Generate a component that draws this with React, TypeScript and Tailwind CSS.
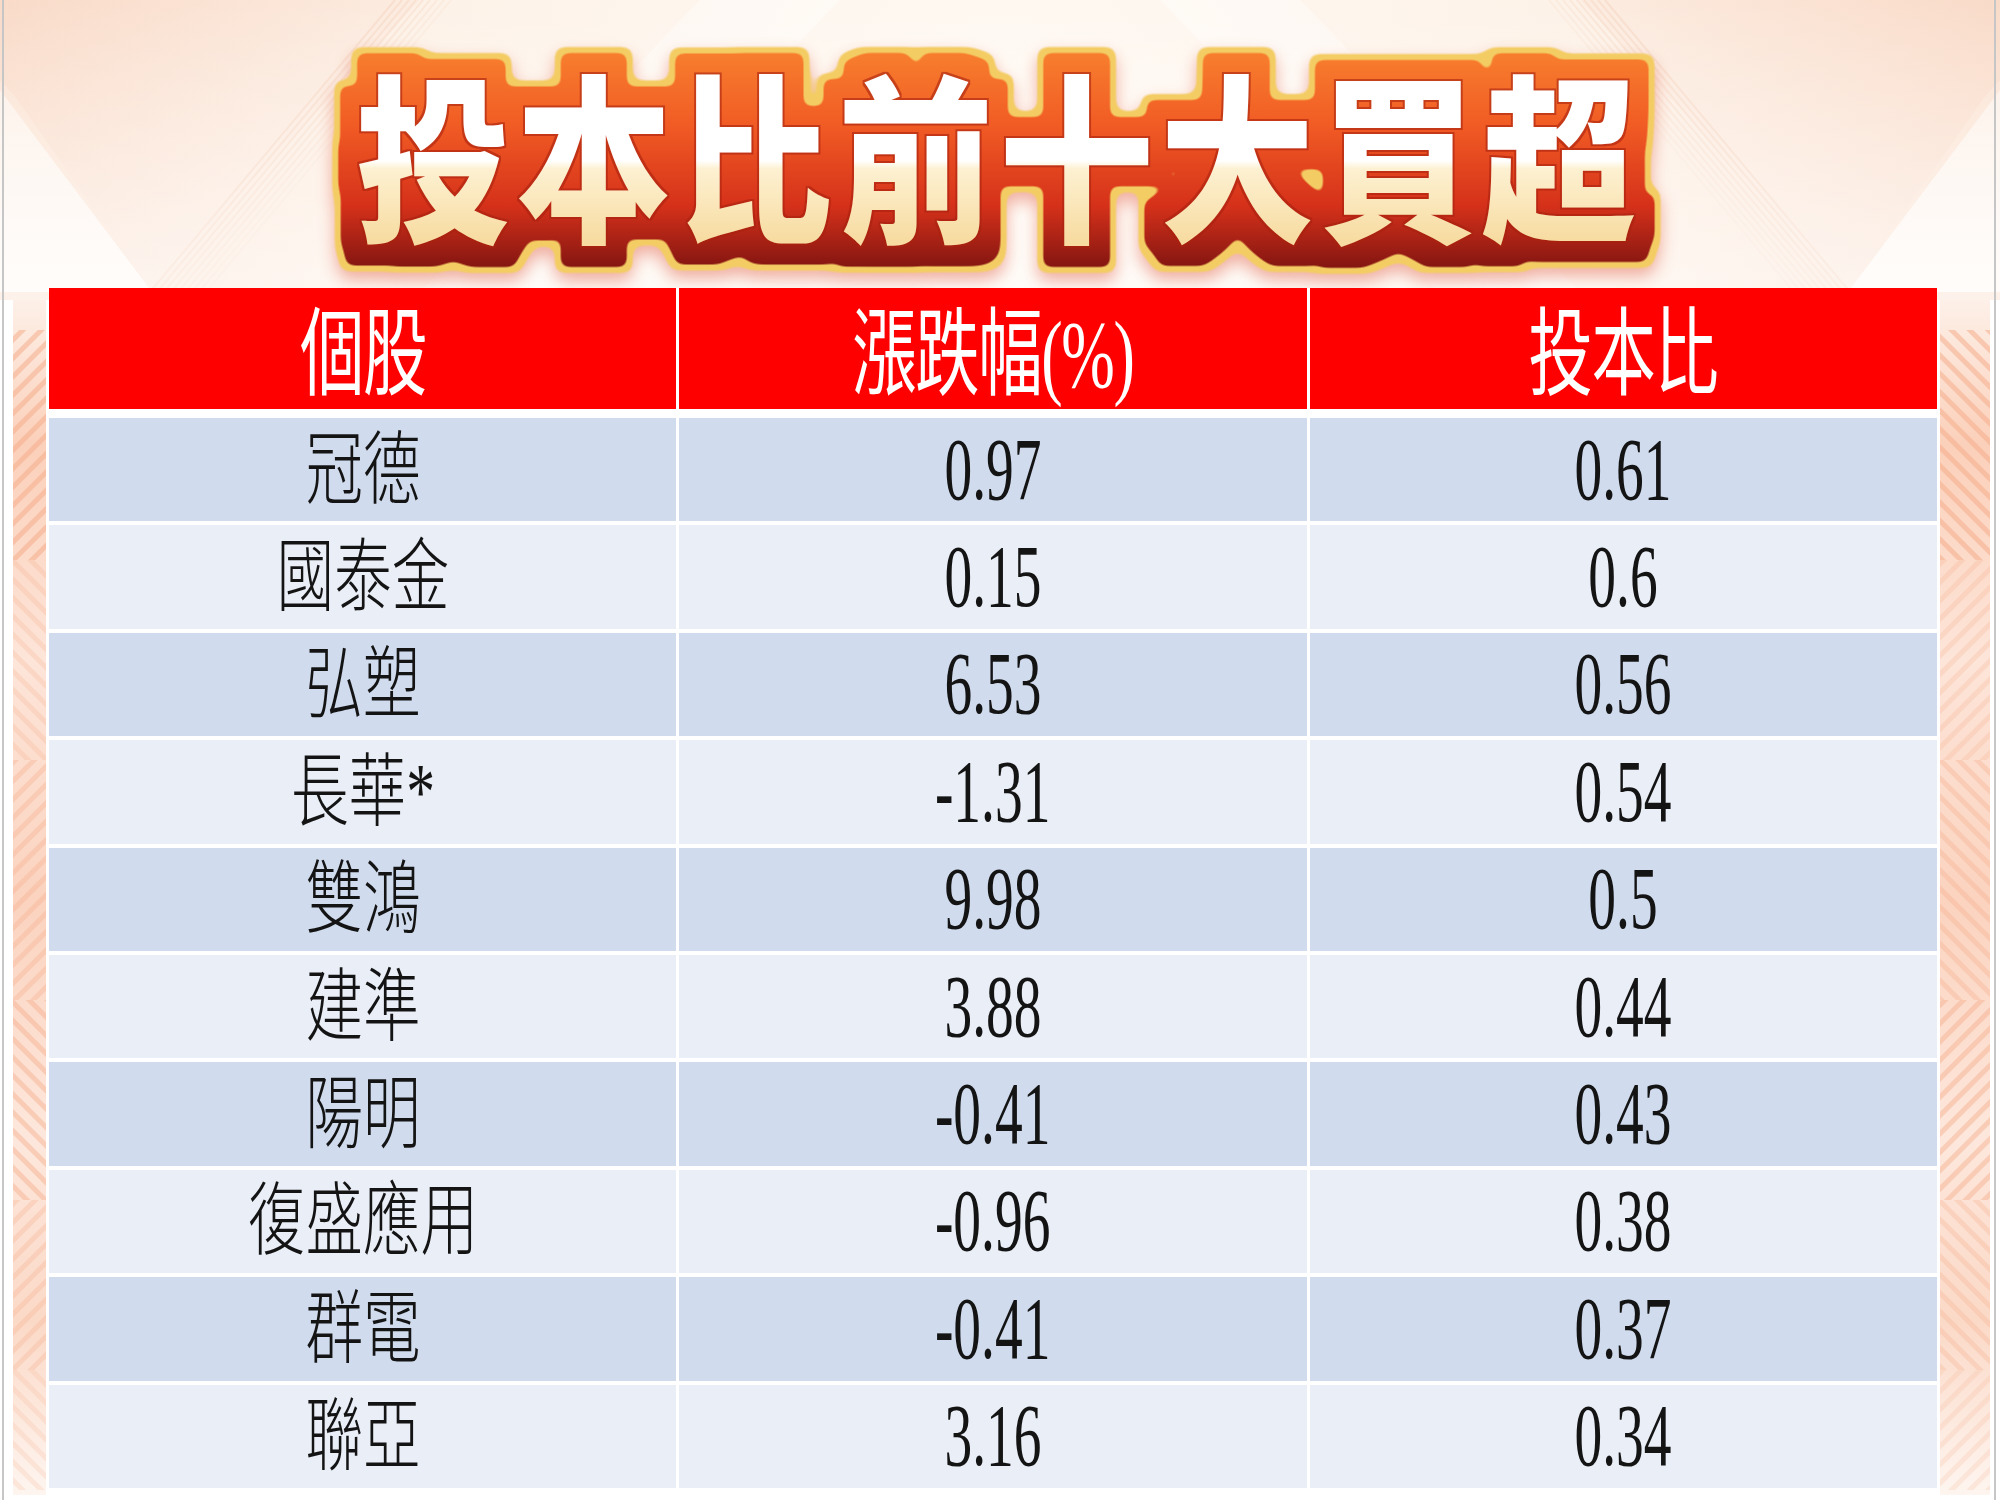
import React from "react";

const TITLE = "投本比前十大買超";

const ROWS: [string, string, string][] = [
  ["冠德", "0.97", "0.61"],
  ["國泰金", "0.15", "0.6"],
  ["弘塑", "6.53", "0.56"],
  ["長華*", "-1.31", "0.54"],
  ["雙鴻", "9.98", "0.5"],
  ["建準", "3.88", "0.44"],
  ["陽明", "-0.41", "0.43"],
  ["復盛應用", "-0.96", "0.38"],
  ["群電", "-0.41", "0.37"],
  ["聯亞", "3.16", "0.34"],
];

const BAND_SEGMENTS = [
  { y: 330, h: 230, a: true, o: 0.55 },
  { y: 560, h: 200, a: false, o: 0.25 },
  { y: 760, h: 240, a: true, o: 0.35 },
  { y: 1000, h: 200, a: false, o: 0.45 },
  { y: 1200, h: 170, a: true, o: 0.3 },
  { y: 1370, h: 120, a: false, o: 0.2 },
];

function Background() {
  const lines = Array.from({ length: 9 }, (_, i) => i);
  return (
    <svg width="2000" height="1500" viewBox="0 0 2000 1500" className="block">
      <defs>
        <radialGradient id="bgTop" cx="1000" cy="140" r="1050" gradientUnits="userSpaceOnUse">
          <stop offset="0" stopColor="#fffaf4" />
          <stop offset="0.55" stopColor="#fdf2e8" />
          <stop offset="1" stopColor="#fbe3d3" />
        </radialGradient>
        <linearGradient id="vLeft" x1="0" y1="0" x2="300" y2="290" gradientUnits="userSpaceOnUse">
          <stop offset="0" stopColor="#f9d9c6" />
          <stop offset="1" stopColor="#fdf1e8" />
        </linearGradient>
        <linearGradient id="vRight" x1="2000" y1="0" x2="1700" y2="290" gradientUnits="userSpaceOnUse">
          <stop offset="0" stopColor="#f9d9c6" />
          <stop offset="1" stopColor="#fdf1e8" />
        </linearGradient>
        <linearGradient id="lowTri" x1="0" y1="90" x2="0" y2="300" gradientUnits="userSpaceOnUse">
          <stop offset="0" stopColor="#fdf1e8" />
          <stop offset="1" stopColor="#fffaf7" />
        </linearGradient>
        <linearGradient id="topFade" x1="0" y1="0" x2="0" y2="300" gradientUnits="userSpaceOnUse">
          <stop offset="0" stopColor="#ffffff" stopOpacity="0" />
          <stop offset="1" stopColor="#ffffff" stopOpacity="0.5" />
        </linearGradient>
        <pattern id="stripeA" width="13" height="13" patternUnits="userSpaceOnUse" patternTransform="rotate(45)">
          <rect x="0" y="0" width="5" height="13" fill="#f5ad8b" />
        </pattern>
        <pattern id="stripeB" width="13" height="13" patternUnits="userSpaceOnUse" patternTransform="rotate(-45)">
          <rect x="0" y="0" width="5" height="13" fill="#f5ad8b" />
        </pattern>
        <linearGradient id="bandFill" x1="0" y1="300" x2="0" y2="1500" gradientUnits="userSpaceOnUse">
          <stop offset="0" stopColor="#fdf0e8" />
          <stop offset="0.12" stopColor="#fbd0ba" />
          <stop offset="0.3" stopColor="#fde5d9" />
          <stop offset="0.5" stopColor="#fbd3bf" />
          <stop offset="0.7" stopColor="#fde7dc" />
          <stop offset="0.85" stopColor="#fbd9c7" />
          <stop offset="1" stopColor="#fef6f1" />
        </linearGradient>
      </defs>
      <rect x="0" y="0" width="2000" height="1500" fill="#ffffff" />
      <rect x="0" y="0" width="2000" height="300" fill="url(#bgTop)" />
      <polygon points="0,0 420,0 152,292 14,95 0,80" fill="url(#vLeft)" opacity="0.85" />
      <polygon points="0,90 152,292 0,292" fill="url(#lowTri)" />
      {lines.map((i) => (
        <line key={"l" + i} x1={395 + i * 7} y1={0} x2={150 + i * 7} y2={292} stroke="#f7d9c6" strokeWidth="2" opacity={0.7 - i * 0.06} />
      ))}
      <polygon points="2000,0 1580,0 1848,292 1986,95 2000,80" fill="url(#vRight)" opacity="0.85" />
      <polygon points="2000,90 1848,292 2000,292" fill="url(#lowTri)" />
      {lines.map((i) => (
        <line key={"r" + i} x1={1605 - i * 7} y1={0} x2={1850 - i * 7} y2={292} stroke="#f7d9c6" strokeWidth="2" opacity={0.7 - i * 0.06} />
      ))}
      <polygon points="700,0 840,0 560,292 420,292" fill="#ffffff" opacity="0.35" />
      <polygon points="1160,0 1300,0 1580,292 1440,292" fill="#ffffff" opacity="0.35" />
      <rect x="0" y="0" width="2000" height="300" fill="url(#topFade)" />
      <rect x="13" y="300" width="33" height="1195" fill="url(#bandFill)" />
      <rect x="1940" y="300" width="50" height="1195" fill="url(#bandFill)" />
      {BAND_SEGMENTS.map((s) => (
        <React.Fragment key={s.y}>
          <rect x="13" y={s.y} width="33" height={s.h} fill={s.a ? "url(#stripeA)" : "url(#stripeB)"} opacity={s.o} />
          <rect x="1940" y={s.y} width="50" height={s.h} fill={s.a ? "url(#stripeB)" : "url(#stripeA)"} opacity={s.o} />
        </React.Fragment>
      ))}
    </svg>
  );
}

function Title() {
  const sx = 0.86;
  return (
    <svg width="1990" height="288" viewBox="0 0 1990 288" className="block font-['Noto_Sans_CJK_TC','Noto_Sans_CJK_SC',sans-serif] font-black">
      <defs>
        <linearGradient id="tRed" x1="0" y1="45" x2="0" y2="275" gradientUnits="userSpaceOnUse">
          <stop offset="0" stopColor="#f8822f" />
          <stop offset="0.35" stopColor="#f15b24" />
          <stop offset="0.7" stopColor="#d5311a" />
          <stop offset="1" stopColor="#7a1210" />
        </linearGradient>
        <rect id="tRedRect" x="0" y="0" width="1990" height="288" fill="url(#tRed)" />
        <linearGradient id="tFill" x1="0" y1="79" x2="0" y2="242" gradientUnits="userSpaceOnUse">
          <stop offset="0" stopColor="#ffffff" />
          <stop offset="0.5" stopColor="#ffffff" />
          <stop offset="0.55" stopColor="#fdf1d2" />
          <stop offset="1" stopColor="#f7dba0" />
        </linearGradient>
        <filter id="tFx" x="0" y="0" width="1990" height="288" filterUnits="userSpaceOnUse" colorInterpolationFilters="sRGB">
          <feMorphology in="SourceAlpha" operator="dilate" radius="27" result="g0" />
          <feGaussianBlur in="g0" stdDeviation="6" result="g1" />
          <feComponentTransfer in="g1" result="goldA">
            <feFuncA type="linear" slope="6" intercept="-2.5" />
          </feComponentTransfer>
          <feGaussianBlur in="goldA" stdDeviation="8" result="sb" />
          <feOffset in="sb" dy="8" result="sbo" />
          <feFlood floodColor="#e0543a" floodOpacity="0.45" />
          <feComposite in2="sbo" operator="in" result="shadow" />
          <feFlood floodColor="#f3cd64" />
          <feComposite in2="goldA" operator="in" result="gold" />
          <feMorphology in="SourceAlpha" operator="dilate" radius="21" result="r0" />
          <feGaussianBlur in="r0" stdDeviation="5" result="r1" />
          <feComponentTransfer in="r1" result="redA">
            <feFuncA type="linear" slope="6" intercept="-2.5" />
          </feComponentTransfer>
          <feImage href="#tRedRect" x="0" y="0" width="1990" height="288" result="redImg" />
          <feComposite in="redImg" in2="redA" operator="in" result="red" />
          <feMorphology in="SourceAlpha" operator="dilate" radius="2" result="e0" />
          <feFlood floodColor="#a8220f" floodOpacity="0.6" />
          <feComposite in2="e0" operator="in" result="edge" />
          <feMerge>
            <feMergeNode in="shadow" />
            <feMergeNode in="gold" />
            <feMergeNode in="red" />
            <feMergeNode in="edge" />
            <feMergeNode in="SourceGraphic" />
          </feMerge>
        </filter>
      </defs>
      <g filter="url(#tFx)">
        <text
          x={995 / sx}
          y={228}
          fontSize={180}
          letterSpacing={7}
          textAnchor="middle"
          transform={`scale(${sx} 1)`}
          fill="url(#tFill)"
        >
          {TITLE}
        </text>
      </g>
    </svg>
  );
}

export default function App() {
  return (
    <div className="relative w-[2000px] h-[1500px] overflow-hidden bg-white">
      <div className="absolute inset-0">
        <Background />
      </div>
      <div className="relative ml-[2px] w-[1994px] h-[1500px] border-x-2 border-[#c6c6c6] flex flex-col">
        <div className="h-[288px] flex justify-center">
          <Title />
        </div>
        <div className="ml-[45px] w-[1888px] flex flex-col">
          <div className="h-[121px] grid grid-cols-3 gap-x-[3px] bg-white">
            {["個股", "漲跌幅(%)", "投本比"].map((h) => (
              <div key={h} className="bg-[#ff0000] flex items-center justify-center pt-[12px]">
                <span className="inline-block scale-x-[0.67] text-[96px] leading-none text-white tracking-[-2px] font-['Liberation_Serif','Noto_Sans_CJK_TC',serif] font-normal">
                  {h}
                </span>
              </div>
            ))}
          </div>
          <div className="mt-[9px] h-[1070px] grid grid-cols-3 grid-rows-[repeat(10,minmax(0,1fr))] gap-x-[3px] gap-y-[4px] bg-white">
            {ROWS.map((r, i) => {
              const bg = i % 2 === 0 ? "bg-[#d0dcee]" : "bg-[#e9eef7]";
              return (
                <React.Fragment key={r[0]}>
                  <div className={`${bg} flex items-center justify-center`}>
                    <span className="inline-block scale-x-[0.72] text-[80px] leading-none text-[#141414] font-['Liberation_Serif','Noto_Sans_CJK_TC',serif] font-light">
                      {r[0]}
                    </span>
                  </div>
                  <div className={`${bg} flex items-center justify-center`}>
                    <span className="inline-block scale-x-[0.63] text-[88px] leading-none text-[#141414] font-['Liberation_Serif',serif]">
                      {r[1]}
                    </span>
                  </div>
                  <div className={`${bg} flex items-center justify-center`}>
                    <span className="inline-block scale-x-[0.63] text-[88px] leading-none text-[#141414] font-['Liberation_Serif',serif]">
                      {r[2]}
                    </span>
                  </div>
                </React.Fragment>
              );
            })}
          </div>
        </div>
      </div>
    </div>
  );
}
